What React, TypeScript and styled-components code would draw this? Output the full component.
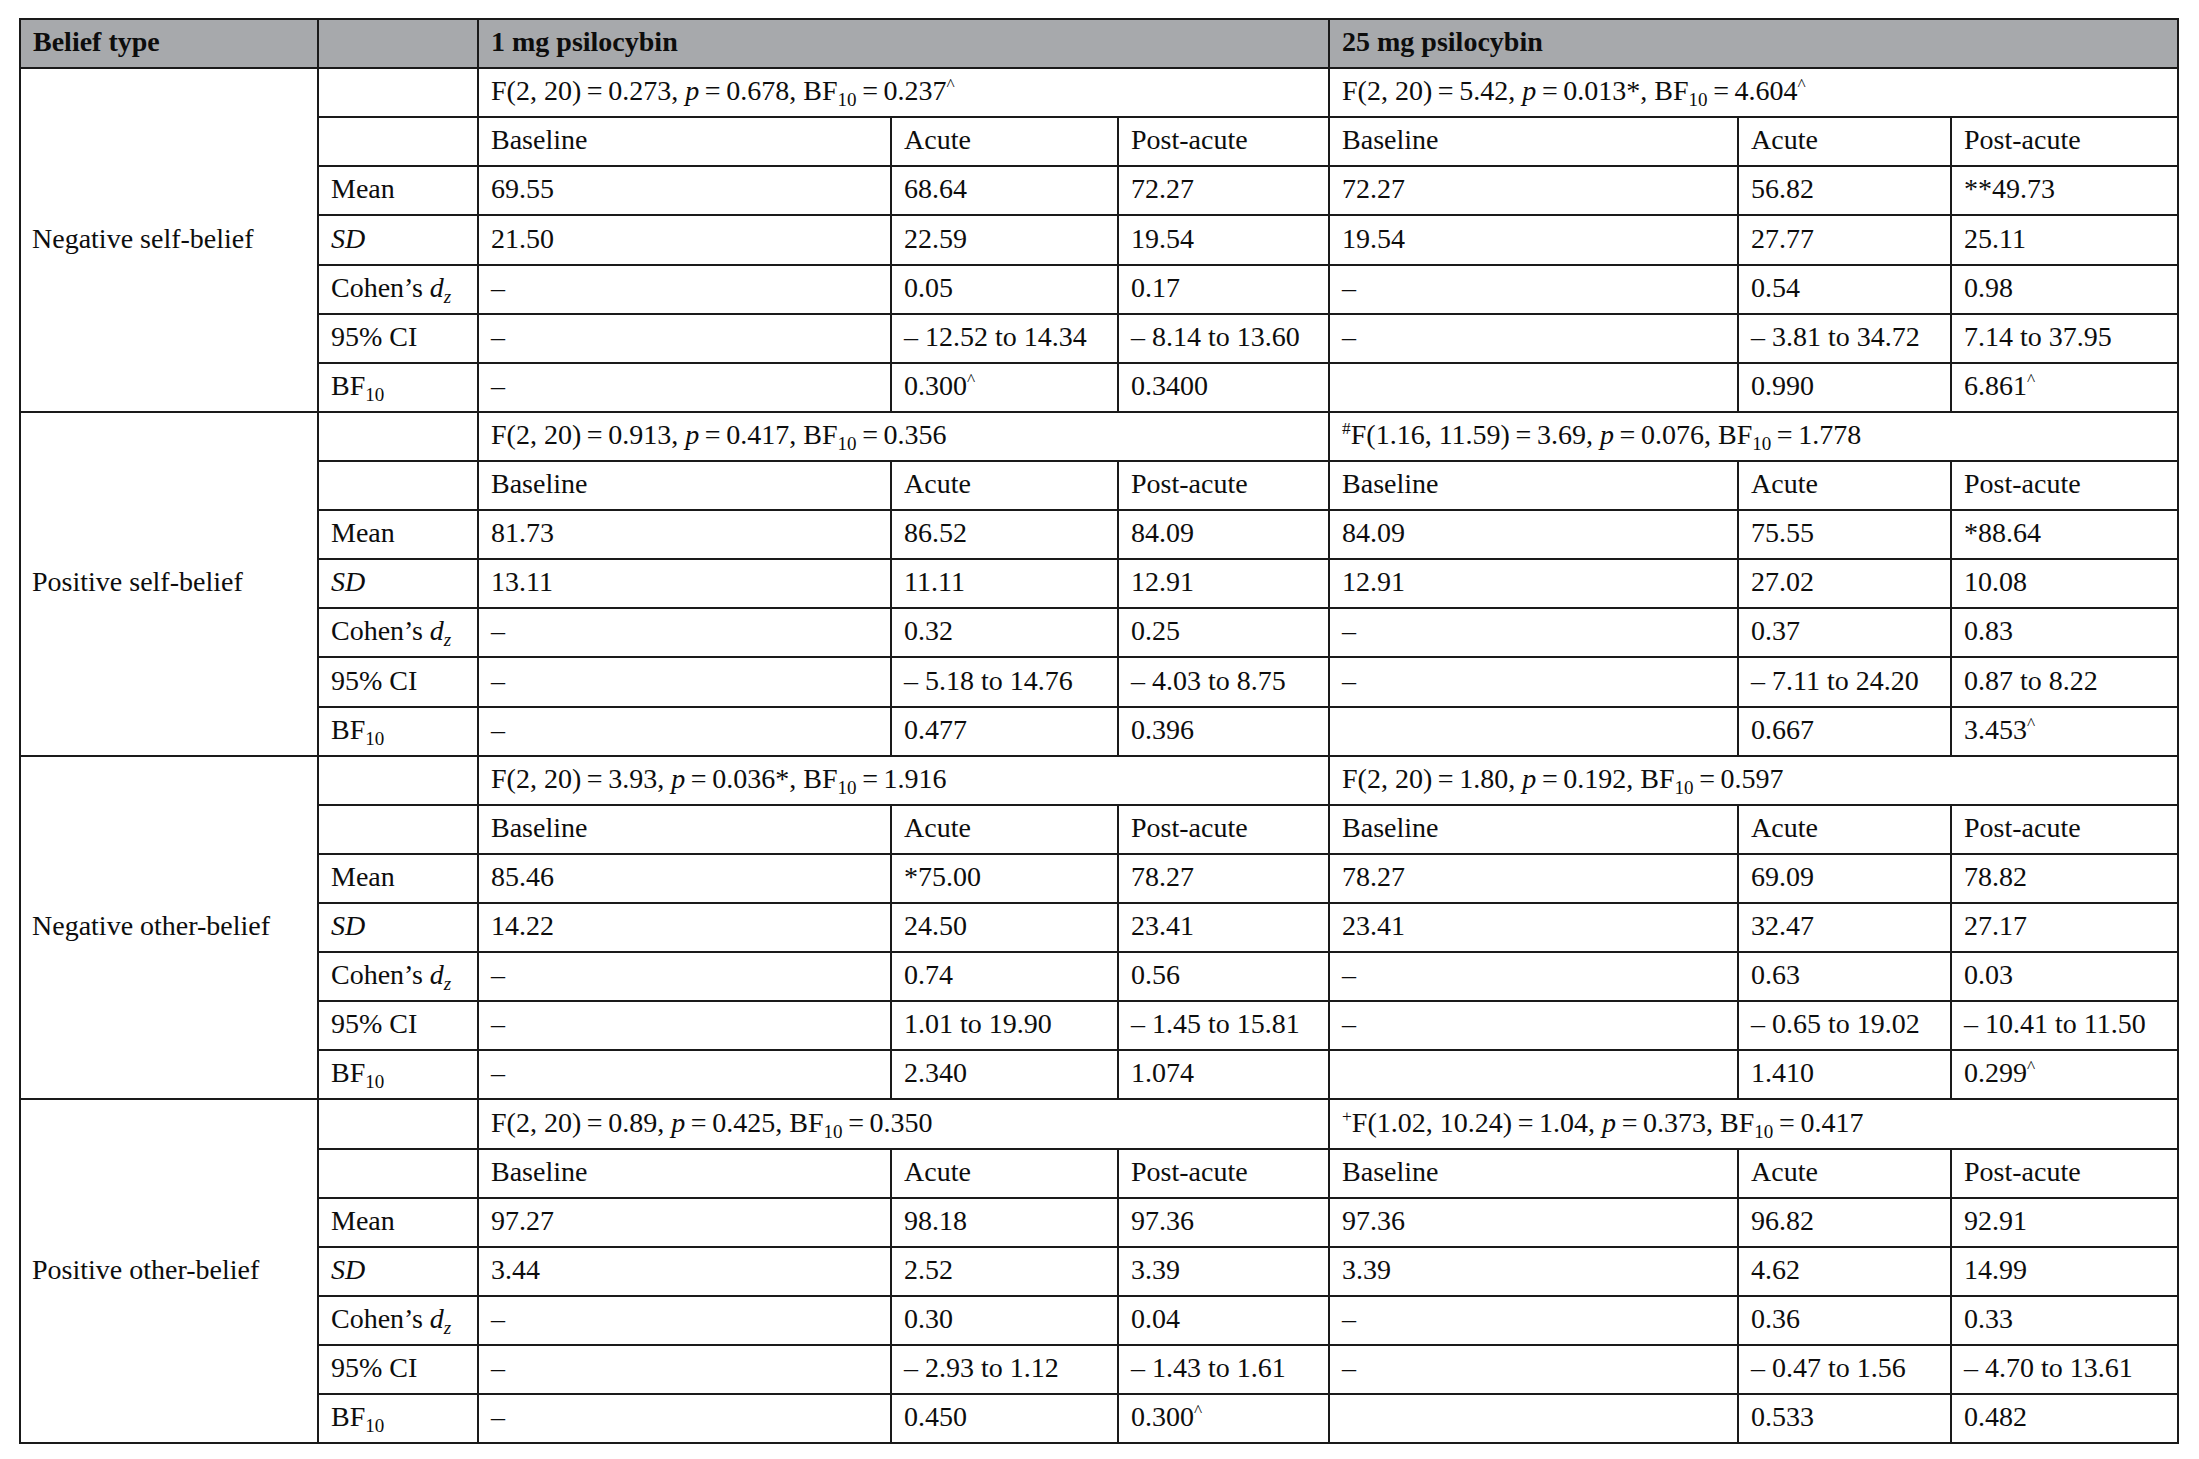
import React from 'react';
import styled, { createGlobalStyle } from 'styled-components';

const GlobalStyle = createGlobalStyle`
  html, body {
    margin: 0;
    padding: 0;
    background: #ffffff;
  }
  body {
    font-family: "Liberation Serif", "Times New Roman", serif;
    color: #0d0d0d;
  }
`;

const Page = styled.div`
  padding: 18px 0 0 19px;
`;

const Table = styled.table`
  border-collapse: collapse;
  table-layout: fixed;
  width: 2158px;
  font-size: 28px;
  line-height: 1.1;
`;

const Row = styled.tr`
  height: 49.12px;
`;

const HeadCell = styled.th`
  background: #a7a9ac;
  border: 2px solid #1a1a1a;
  padding: 0 12px 2px;
  text-align: left;
  font-weight: bold;
  white-space: nowrap;
  vertical-align: middle;
`;

const Cell = styled.td`
  border: 2px solid #1a1a1a;
  padding: 0 12px 2px;
  text-align: left;
  white-space: nowrap;
  vertical-align: middle;
`;

const GroupLabel = styled(Cell)`
  padding-left: 11px;
`;

const Sub = styled.sub`
  font-size: 0.68em;
  line-height: 0;
  vertical-align: -0.34em;
`;

const Sup = styled.sup`
  font-size: 0.62em;
  line-height: 0;
  vertical-align: 0.55em;
`;

const Em = styled.i`
  font-style: italic;
`;

const widths = [298, 160, 413, 227, 211, 409, 213, 227];

type StatProps = {
  mark?: string;
  df: string;
  f: string;
  p: string;
  bf: string;
  caret?: boolean;
};

// thin spaces round the equals sign, as in the typeset table
const EQ = '\u2009=\u2009';

const FStat: React.FC<StatProps> = ({ mark, df, f, p, bf, caret }) => (
  <>
    {mark && <Sup>{mark}</Sup>}F({df}){EQ}{f}, <Em>p</Em>{EQ}{p}, BF<Sub>10</Sub>{EQ}{bf}
    {caret && <Sup>^</Sup>}
  </>
);

const val = (s: string) =>
  s.endsWith('^') ? (
    <>
      {s.slice(0, -1)}
      <Sup>^</Sup>
    </>
  ) : (
    s
  );

type Group = {
  label: string;
  low: StatProps;
  high: StatProps;
  mean: string[];
  sd: string[];
  d: string[];
  ci: string[];
  bf: string[];
};

const groups: Group[] = [
  {
    label: 'Negative self-belief',
    low: { df: '2, 20', f: '0.273', p: '0.678', bf: '0.237', caret: true },
    high: { df: '2, 20', f: '5.42', p: '0.013*', bf: '4.604', caret: true },
    mean: ['69.55', '68.64', '72.27', '72.27', '56.82', '**49.73'],
    sd: ['21.50', '22.59', '19.54', '19.54', '27.77', '25.11'],
    d: ['–', '0.05', '0.17', '–', '0.54', '0.98'],
    ci: ['–', '– 12.52 to 14.34', '– 8.14 to 13.60', '–', '– 3.81 to 34.72', '7.14 to 37.95'],
    bf: ['–', '0.300^', '0.3400', '', '0.990', '6.861^'],
  },
  {
    label: 'Positive self-belief',
    low: { df: '2, 20', f: '0.913', p: '0.417', bf: '0.356' },
    high: { mark: '#', df: '1.16, 11.59', f: '3.69', p: '0.076', bf: '1.778' },
    mean: ['81.73', '86.52', '84.09', '84.09', '75.55', '*88.64'],
    sd: ['13.11', '11.11', '12.91', '12.91', '27.02', '10.08'],
    d: ['–', '0.32', '0.25', '–', '0.37', '0.83'],
    ci: ['–', '– 5.18 to 14.76', '– 4.03 to 8.75', '–', '– 7.11 to 24.20', '0.87 to 8.22'],
    bf: ['–', '0.477', '0.396', '', '0.667', '3.453^'],
  },
  {
    label: 'Negative other-belief',
    low: { df: '2, 20', f: '3.93', p: '0.036*', bf: '1.916' },
    high: { df: '2, 20', f: '1.80', p: '0.192', bf: '0.597' },
    mean: ['85.46', '*75.00', '78.27', '78.27', '69.09', '78.82'],
    sd: ['14.22', '24.50', '23.41', '23.41', '32.47', '27.17'],
    d: ['–', '0.74', '0.56', '–', '0.63', '0.03'],
    ci: ['–', '1.01 to 19.90', '– 1.45 to 15.81', '–', '– 0.65 to 19.02', '– 10.41 to 11.50'],
    bf: ['–', '2.340', '1.074', '', '1.410', '0.299^'],
  },
  {
    label: 'Positive other-belief',
    low: { df: '2, 20', f: '0.89', p: '0.425', bf: '0.350' },
    high: { mark: '+', df: '1.02, 10.24', f: '1.04', p: '0.373', bf: '0.417' },
    mean: ['97.27', '98.18', '97.36', '97.36', '96.82', '92.91'],
    sd: ['3.44', '2.52', '3.39', '3.39', '4.62', '14.99'],
    d: ['–', '0.30', '0.04', '–', '0.36', '0.33'],
    ci: ['–', '– 2.93 to 1.12', '– 1.43 to 1.61', '–', '– 0.47 to 1.56', '– 4.70 to 13.61'],
    bf: ['–', '0.450', '0.300^', '', '0.533', '0.482'],
  },
];

const phases = ['Baseline', 'Acute', 'Post-acute', 'Baseline', 'Acute', 'Post-acute'];

const statRows: { key: keyof Group; label: React.ReactNode }[] = [
  { key: 'mean', label: 'Mean' },
  { key: 'sd', label: <Em>SD</Em> },
  {
    key: 'd',
    label: (
      <>
        Cohen’s <Em>d</Em>
        <Sub>
          <Em>z</Em>
        </Sub>
      </>
    ),
  },
  { key: 'ci', label: '95% CI' },
  {
    key: 'bf',
    label: (
      <>
        BF<Sub>10</Sub>
      </>
    ),
  },
];

const BeliefGroup: React.FC<{ group: Group }> = ({ group }) => (
  <>
    <Row>
      <GroupLabel rowSpan={7}>{group.label}</GroupLabel>
      <Cell />
      <Cell colSpan={3}>
        <FStat {...group.low} />
      </Cell>
      <Cell colSpan={3}>
        <FStat {...group.high} />
      </Cell>
    </Row>
    <Row>
      <Cell />
      {phases.map((p, i) => (
        <Cell key={i}>{p}</Cell>
      ))}
    </Row>
    {statRows.map(r => (
      <Row key={r.key}>
        <Cell>{r.label}</Cell>
        {(group[r.key] as string[]).map((v, i) => (
          <Cell key={i}>{val(v)}</Cell>
        ))}
      </Row>
    ))}
  </>
);

export default function App() {
  return (
    <>
      <GlobalStyle />
      <Page>
        <Table>
          <colgroup>
            {widths.map((w, i) => (
              <col key={i} style={{ width: w }} />
            ))}
          </colgroup>
          <thead>
            <Row>
              <HeadCell>Belief type</HeadCell>
              <HeadCell />
              <HeadCell colSpan={3}>1 mg psilocybin</HeadCell>
              <HeadCell colSpan={3}>25 mg psilocybin</HeadCell>
            </Row>
          </thead>
          <tbody>
            {groups.map(g => (
              <BeliefGroup key={g.label} group={g} />
            ))}
          </tbody>
        </Table>
      </Page>
    </>
  );
}
